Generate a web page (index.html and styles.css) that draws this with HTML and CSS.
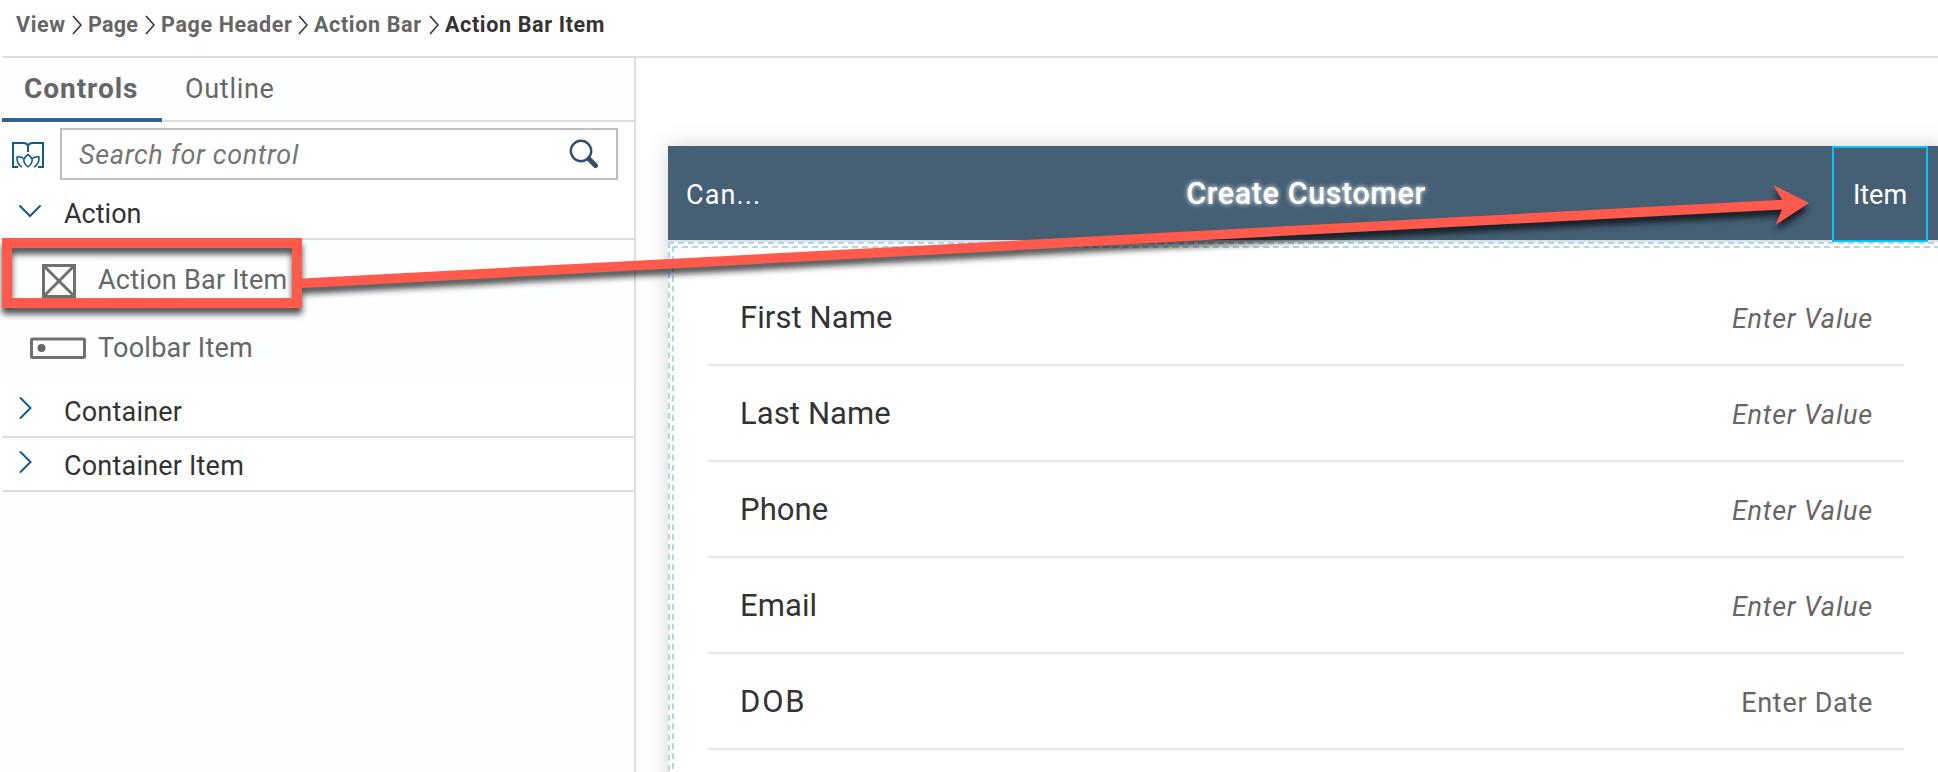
FILE: index.html
```html
<!DOCTYPE html>
<html lang="en">
<head>
<meta charset="utf-8">
<title>Page designer</title>
<link rel="stylesheet" href="styles.css">
</head>
<body>
<div class="app">
  <nav class="breadcrumb">
    <span class="crumb crumb-view">View</span>
    <svg class="sep" viewBox="0 0 10 20"><path d="M1 1 9 10 1 19"/></svg>
    <span class="crumb crumb-page">Page</span>
    <svg class="sep" viewBox="0 0 10 20"><path d="M1 1 9 10 1 19"/></svg>
    <span class="crumb crumb-header">Page Header</span>
    <svg class="sep" viewBox="0 0 10 20"><path d="M1 1 9 10 1 19"/></svg>
    <span class="crumb crumb-bar">Action Bar</span>
    <svg class="sep" viewBox="0 0 10 20"><path d="M1 1 9 10 1 19"/></svg>
    <span class="crumb current">Action Bar Item</span>
  </nav>
  <div class="workspace">
    <aside class="panel">
      <div class="tabs">
        <div class="tab active">Controls</div>
        <div class="tab">Outline</div>
      </div>
      <div class="search-row">
        <svg class="book" viewBox="0 0 32 26"><path d="M6 25H1V1H11Q16 1 16 5Q16 1 21 1H31V25H26M16 4V10"/><path class="lotus" d="M12 17Q13 14.500 16 12.500Q19 14.500 20 17M16 25Q11 21 12 17Q9 14 5 15Q4.500 22 10 25M16 25Q21 21 20 17Q23 14 27 15Q27.500 22 22 25"/></svg>
        <div class="search">
          <span class="placeholder">Search for control</span>
          <svg class="magnifier" viewBox="0 0 30 30"><circle cx="12" cy="12" r="10.200"/><path d="M20 20 26.500 26.500"/></svg>
        </div>
      </div>
      <div class="group open"><svg class="chevron" viewBox="0 0 22 22"><path d="M1 6 11 16 21 6"/></svg><span>Action</span></div>
      <div class="items">
        <div class="item">
          <svg class="item-icon" viewBox="0 0 56 36"><rect x="15.500" y="2.500" width="31" height="31"/><path d="M17 4 45 32M45 4 17 32"/></svg>
          <span class="item-name">Action Bar Item</span>
        </div>
        <div class="item">
          <svg class="item-icon" viewBox="0 0 56 36"><rect x="1.500" y="9" width="53" height="18.500" rx="1"/><circle cx="11.500" cy="18" r="4"/></svg>
          <span class="item-name">Toolbar Item</span>
        </div>
      </div>
      <div class="group"><svg class="chevron" viewBox="0 0 22 22"><path d="M1.500 0 11.500 10 1.500 20"/></svg><span>Container</span></div>
      <div class="group"><svg class="chevron" viewBox="0 0 22 22"><path d="M1.500 0 11.500 10 1.500 20"/></svg><span>Container Item</span></div>
    </aside>
    <main class="canvas">
      <div class="device">
        <header class="action-bar">
          <span class="bar-left">Can...</span>
          <span class="bar-title">Create Customer</span>
          <span class="bar-item">Item</span>
        </header>
        <div class="drop-outer">
          <div class="drop-inner">
            <div class="field"><span class="label">First Name</span><span class="value">Enter Value</span></div>
            <div class="field"><span class="label">Last Name</span><span class="value">Enter Value</span></div>
            <div class="field"><span class="label">Phone</span><span class="value">Enter Value</span></div>
            <div class="field"><span class="label">Email</span><span class="value">Enter Value</span></div>
            <div class="field"><span class="label wide">DOB</span><span class="value date">Enter Date</span></div>
          </div>
        </div>
      </div>
    </main>
  </div>
  <svg class="annotation" viewBox="0 0 1938 772">
    <path class="frame" d="M7 243H297V303H7Z"/>
    <path class="arrow" d="M302 278.500 1782 199.800 1773.500 185 1809 203 1775.500 225 1782 209.400 302 288Z"/>
  </svg>
</div>
</body>
</html>
```

FILE: styles.css
```css
* { box-sizing: border-box; }
body { margin: 0; background: #fff; font-family: Roboto, "Liberation Sans", sans-serif; font-size: 27px; color: #333; }
svg { fill: none; flex: none; display: block; }
.app { position: relative; display: flex; flex-direction: column; width: 1938px; height: 772px; padding-left: 2px; overflow: hidden; }
.breadcrumb { display: flex; align-items: center; height: 58px; padding: 0 0 8px 14px; border-bottom: 2px solid #dcdce2; font-size: 21.5px; font-weight: 700; letter-spacing: .65px; color: #666; white-space: nowrap; }
.sep { width: 10px; height: 20px; margin: 2px 6px 0 7px; stroke: #333; stroke-width: 1.6; }
.crumb-view { width: 49px; }
.crumb-page { width: 50px; letter-spacing: .2px; }
.crumb-header { width: 130px; }
.crumb-bar { width: 108px; }
.current { color: #333; }
.workspace { display: flex; flex: 1; min-height: 0; }
.panel { display: flex; flex-direction: column; width: 634px; flex: none; background: #fdfeff; border-right: 2px solid #dcdce2; white-space: nowrap; }
.tabs { display: flex; height: 64px; border-bottom: 2px solid #dcdce2; color: #666; line-height: 62px; letter-spacing: .7px; }
.tab { height: 64px; padding: 0 23px; }
.tab.active { width: 160px; padding: 0 22px; border-bottom: 4px solid #346187; font-weight: 700; font-size: 28px; letter-spacing: .95px; }
.search-row { display: flex; align-items: center; height: 64px; padding: 0 16px 0 10px; background: #fff; }
.book { width: 32px; height: 26px; margin: 2px 16px 0 0; stroke: #0f5a8e; stroke-width: 2; }
.lotus { stroke-width: 1.6; }
.search { display: flex; flex: 1; align-items: center; justify-content: space-between; height: 52px; border: 2px solid #bfbfbf; padding: 0 17px 0 17px; }
.placeholder { padding-top: 2px; color: #757575; font-style: italic; letter-spacing: .65px; }
.magnifier { width: 30px; height: 30px; stroke: #2e5170; stroke-width: 2.4; }
.magnifier path { stroke-width: 5; stroke-linecap: round; }
.group { display: flex; align-items: center; height: 54px; padding-left: 17px; background: #fff; border-bottom: 2px solid #dcdce2; letter-spacing: .2px; }
.group span { padding-top: 3px; }
.open { letter-spacing: 0; }
.chevron { width: 22px; height: 22px; margin: -2px 23px 0 0; stroke: #0f5a8e; stroke-width: 2; stroke-linecap: round; overflow: visible; }
.items { height: 144px; padding: 6px 0 0 28px; color: #666; }
.item { display: flex; align-items: center; height: 68px; letter-spacing: .25px; }
.item-icon { width: 56px; height: 36px; margin-right: 12px; stroke: #707070; stroke-width: 3; }
.item:first-child .item-icon { margin: 1px 14px 0 -2px; }
.item-icon circle { fill: #666; stroke: none; }
.canvas { flex: 1; min-width: 0; padding: 88px 0 0 32px; overflow: hidden; }
.device { width: 1276px; height: 800px; background: #fff; box-shadow: 0 0 22px rgba(0,0,0,.17); }
.action-bar { display: grid; grid-template-columns: 112px 1052px 96px 16px; align-items: center; height: 96px; background: #455f75; border-bottom: 2px solid #d7e0ea; color: #fff; }
.bar-left { padding: 3px 0 0 18px; letter-spacing: 1.1px; }
.bar-title { padding-top: 1px; text-align: center; font-size: 30.5px; font-weight: 500; letter-spacing: .6px; text-shadow: 0 0 5px #fff; }
.bar-item { height: 96px; margin-bottom: -2px; line-height: 94px; border: 2px solid #00c3ff; text-align: center; }
.drop-outer { height: 720px; padding: 2px; border: 2px dashed #add8e6; }
.drop-inner { height: 712px; padding: 22px 34px 0; border: 2px dashed #add8e6; }
.field { display: flex; align-items: center; justify-content: space-between; height: 96px; padding: 0 31px 0 32px; border-bottom: 2px solid #e5e5e5; }
.label { font-size: 31px; letter-spacing: .1px; }
.wide { letter-spacing: 1.8px; }
.value { padding-top: 4px; color: #666; font-style: italic; letter-spacing: .8px; }
.date { font-style: normal; letter-spacing: .7px; }
.annotation { position: absolute; left: 0; top: 0; width: 1938px; height: 772px; filter: drop-shadow(0 6px 3px rgba(0,0,0,.7)); }
.frame { stroke: #ff5a4b; stroke-width: 10; }
.arrow { fill: #ff5a4b; }
```
